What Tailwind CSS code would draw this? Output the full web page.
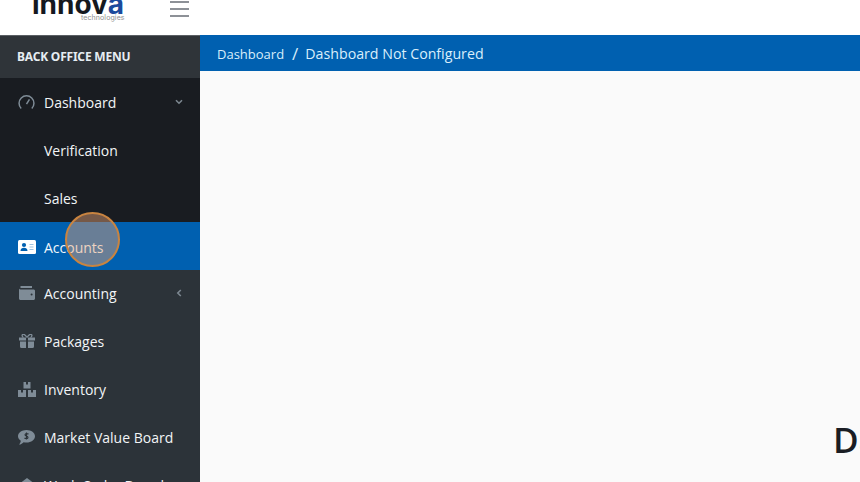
<!DOCTYPE html>
<html lang="en">
<head>
  <meta charset="UTF-8" />
  <meta name="viewport" content="width=device-width, initial-scale=1.0"/>
  <title>Back Office</title>
  <script src="https://cdn.jsdelivr.net/npm/@tailwindcss/browser@4"></script>
</head>
<body class="h-screen overflow-hidden flex flex-col bg-white relative font-['Open_Sans',sans-serif]">
  <!-- top bar, page is scrolled so logo is cut off -->
  <header class="h-[35px] shrink-0 flex bg-white overflow-hidden">
    <div class="w-[170px] relative shrink-0 overflow-hidden">
      <div class="absolute left-[32px] top-[-3px] text-[28px] leading-[14px] font-bold text-[#15181f] font-['Inter',sans-serif]">innov<span class="text-[#1c4a9c]">a</span></div>
      <div class="absolute left-[81px] top-[13px] text-[7px] leading-[9px] tracking-[0.1px] text-[#8f8f8f] font-['Inter',sans-serif]">technologies</div>
    </div>
    <div class="flex flex-col gap-[5px] pt-px">
      <div class="w-[19px] h-[2px] bg-[#8d9197]"></div>
      <div class="w-[19px] h-[2px] bg-[#8d9197]"></div>
      <div class="w-[19px] h-[2px] bg-[#8d9197]"></div>
    </div>
  </header>

  <div class="flex flex-1 min-h-0">
    <!-- sidebar -->
    <aside class="w-[200px] shrink-0 bg-[#2c3339] text-white overflow-hidden">
      <div class="h-[43px] flex items-center pl-[17px] text-[12px] tracking-[-0.2px] font-bold text-[#e6edf2] bg-[#2f3439] border-t border-[#9aa0a5]/40 font-['Noto_Sans',sans-serif]">BACK OFFICE MENU</div>

      <div class="bg-[#191c21]">
        <a class="h-[48px] flex items-center text-[#f2f5f7]">
          <svg class="w-[17px] h-[17px] ml-[18px] mr-[9px] text-[#7f8c97]" viewBox="0 0 16 16" fill="none" stroke="currentColor" stroke-width="1.4"><path d="M3 13.6A7 7 0 1 1 13 13.6"/><path d="M8 9.5 10.8 5" stroke-width="1.4"/></svg>
          <span class="text-[14px]">Dashboard</span>
          <svg class="w-[8px] h-[6px] ml-auto mr-[17px] text-[#7c8790]" viewBox="0 0 8 6" fill="none" stroke="currentColor" stroke-width="1.6"><path d="M1 1.2 4 4.2 7 1.2"/></svg>
        </a>
        <a class="h-[48px] flex items-center pl-[44px] text-[14px] text-[#f2f5f7]">Verification</a>
        <a class="h-[48px] flex items-center pl-[44px] text-[14px] text-[#f2f5f7]">Sales</a>
      </div>

      <a class="h-[48px] pt-[2px] flex items-center bg-[#0060b0] text-[#f2f7fb]">
        <svg class="w-[18px] h-[14px] ml-[18px] mr-[8px]" viewBox="0 0 18 14"><rect width="18" height="14" rx="1.5" fill="#fff"/><circle cx="6" cy="5" r="2.1" fill="#0060b0"/><path d="M2.5 11c0-2.2 1.6-3.2 3.5-3.2s3.5 1 3.5 3.2z" fill="#0060b0"/><path d="M11.5 4.5h4M11.5 7h4M11.5 9.5h4" stroke="#9fc3e0" stroke-width="1.2"/></svg>
        <span class="text-[14px]">Accounts</span>
      </a>

      <a class="h-[48px] pb-[2px] flex items-center text-[#f2f5f7]">
        <svg class="w-[16px] h-[14px] ml-[19px] mr-[9px] text-[#7f8c97]" viewBox="0 0 16 14" fill="currentColor"><path d="M1.5 0H13v2H1.5z"/><path d="M0 2.5C0 3 .6 3.4 1.5 3.4H14.5c.8 0 1.5.6 1.5 1.4v7.7c0 .8-.7 1.5-1.5 1.5h-13C.7 14 0 13.3 0 12.5z"/><circle cx="12.6" cy="8.5" r="1" fill="#2c3339"/></svg>
        <span class="text-[14px]">Accounting</span>
        <svg class="w-[6px] h-[8px] ml-auto mr-[18px] text-[#7c8790]" viewBox="0 0 6 8" fill="none" stroke="currentColor" stroke-width="1.6"><path d="M4.8 1 1.8 4 4.8 7"/></svg>
      </a>
      <a class="h-[48px] pb-[2px] flex items-center text-[#f2f5f7]">
        <svg class="w-[16px] h-[14px] ml-[19px] mr-[9px] text-[#7f8c97]" viewBox="0 0 16 14" fill="currentColor"><path d="M0 3.5h7v3H0zM9 3.5h7v3H9zM1 7.5h6V14H2.5A1.5 1.5 0 0 1 1 12.5zM9 7.5h6v5a1.5 1.5 0 0 1-1.5 1.5H9z"/><path d="M8 3.5C6.5 1 5 0 3.9.4 2.6.9 3 3 4.5 3.5M8 3.5C9.5 1 11 0 12.1.4c1.3.5.9 2.6-.6 3.1" fill="none" stroke="currentColor" stroke-width="1.3"/></svg>
        <span class="text-[14px]">Packages</span>
      </a>
      <a class="h-[48px] pb-[2px] flex items-center text-[#f2f5f7]">
        <svg class="w-[18px] h-[15px] ml-[18px] mr-[8px] text-[#7f8c97]" viewBox="0 0 18 15" fill="currentColor"><path d="M5.5 0h7v6.5h-7zM0 8h8v7H0zM10 8h8v7h-8z"/><path d="M8 0h2v2.5H8zM3 8h2v2.5H3zM13 8h2v2.5h-2z" fill="#2c3339"/></svg>
        <span class="text-[14px]">Inventory</span>
      </a>
      <a class="h-[48px] pb-[2px] flex items-center text-[#f2f5f7]">
        <svg class="w-[17px] h-[15px] ml-[18px] mr-[9px] text-[#7f8c97]" viewBox="0 0 17 15" fill="currentColor"><path d="M8.5 0C13.2 0 17 2.8 17 6.3s-3.8 6.3-8.5 6.3c-1 0-2-.1-2.9-.4C4.6 13.4 3 14.5 1 14.6c1-1 1.7-2.3 1.8-3.8C1.1 9.7 0 8.1 0 6.3 0 2.8 3.8 0 8.5 0z"/><path d="M10.5 4.2C10 3.5 7.2 3.2 7 4.8c-.2 1.6 3 1 3 2.7 0 1.5-2.7 1.3-3.5.5M8.5 2.5v7" fill="none" stroke="#2c3339" stroke-width="1.1"/></svg>
        <span class="text-[14px]">Market Value Board</span>
      </a>
      <a class="h-[48px] pb-[2px] flex items-center text-[#f2f5f7]">
        <svg class="w-[16px] h-[15px] ml-[19px] mr-[9px] text-[#7f8c97]" viewBox="0 0 16 15" fill="currentColor"><path d="M8 0 16 6v9H0V6z"/></svg>
        <span class="text-[14px]">Work Order Board</span>
      </a>
    </aside>

    <!-- main -->
    <main class="flex-1 min-w-0 bg-[#fafafa] flex flex-col overflow-hidden">
      <div class="h-[36px] shrink-0 bg-[#0060b0] flex items-center pl-[17px] text-[#d9eefb]">
        <span class="text-[13px] pt-[3px]">Dashboard</span>
        <span class="ml-[8px] mr-[7px] text-[17px] leading-[20px] pt-[2px]">/</span>
        <span class="text-[14.2px] pt-[2px]">Dashboard Not Configured</span>
      </div>
      <div class="flex-1 flex justify-end overflow-hidden">
        <h1 class="mt-[345px] -mr-[400px] w-[427px] shrink-0 text-[35px] leading-[48px] font-semibold text-[#1a1d24] whitespace-nowrap">Dashboard Not Configured</h1>
      </div>
    </main>
  </div>

  <!-- click highlight from the recording -->
  <div class="absolute left-[65px] top-[212px] w-[55px] h-[55px] rounded-full bg-[#e8a578]/45 border-2 border-[#c98440]"></div>
</body>
</html>
